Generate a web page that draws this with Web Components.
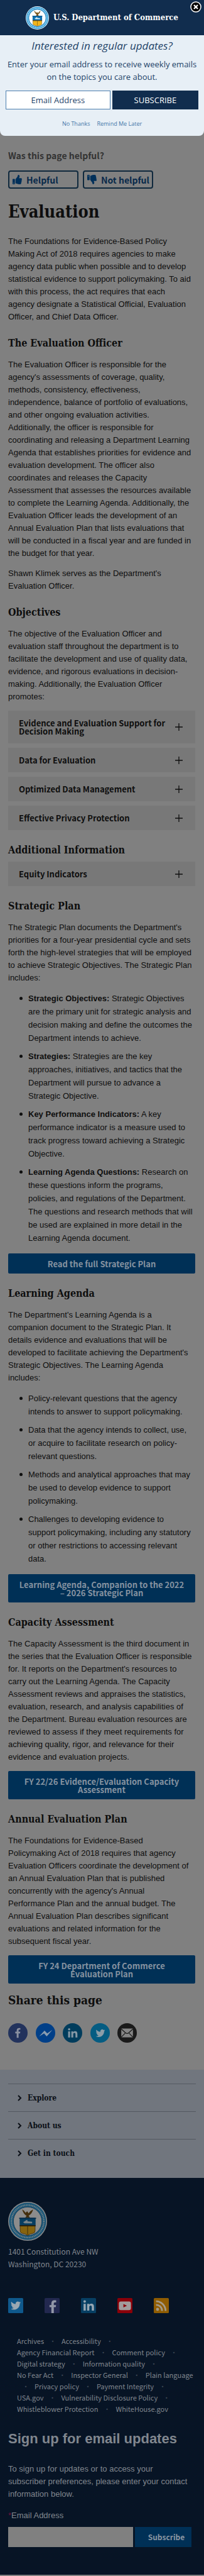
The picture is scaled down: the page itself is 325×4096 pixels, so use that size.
<!DOCTYPE html>
<html lang="en">
<head>
<meta charset="utf-8">
<meta name="viewport" content="width=device-width, initial-scale=1">
<title>Evaluation | U.S. Department of Commerce</title>
<style>
  :root {
    --serif: "DejaVu Serif Condensed", "DejaVu Serif", serif;
    --source: "Noto Sans CJK SC", "Noto Sans", sans-serif;
    --sans: "Liberation Sans", Arial, sans-serif;
    --open: "Open Sans", "Noto Sans", sans-serif;
    --ink: #0e0e0e;
    --action: #003056;
    --action-text: #8592a0;
    --navy: #071425;
  }
  body { margin: 0; background: #808080; color: var(--ink); font: 13px/20px var(--sans); }
  main { display: block; padding: 21px 14px 43px 13px; }
  h1 { margin: 22px 0; font: bold 27px/30px var(--serif); }
  p { margin: 0 0 12px; padding-right: 4px; }
  ul { margin: 0 0 14px; padding: 0 0 0 32px; line-height: 21px; list-style: none; }
  li { position: relative; margin-bottom: 8px; padding-right: 3px; }
  li:last-child { margin-bottom: 0; }
  li::before { content: ""; position: absolute; left: -14px; top: 8px; width: 5px; height: 5px; border-radius: 50%; background: var(--ink); }
</style>
</head>
<body>
<subscribe-popup></subscribe-popup>
<main>
  <page-feedback></page-feedback>
  <h1>Evaluation</h1>
  <p>The Foundations for Evidence-Based Policy Making Act of 2018 requires agencies to make agency data public when possible and to develop statistical evidence to support policymaking. To aid with this process, the act requires that each agency designate a Statistical Official, Evaluation Officer, and Chief Data Officer.</p>

  <content-section heading="The Evaluation Officer">
    <p>The Evaluation Officer is responsible for the agency's assessments of coverage, quality, methods, consistency, effectiveness, independence, balance of portfolio of evaluations, and other ongoing evaluation activities. Additionally, the officer is responsible for coordinating and releasing a Department Learning Agenda that establishes priorities for evidence and evaluation development. The officer also coordinates and releases the Capacity Assessment that assesses the resources available to complete the Learning Agenda. Additionally, the Evaluation Officer leads the development of an Annual Evaluation Plan that lists evaluations that will be conducted in a fiscal year and are funded in the budget for that year.</p>
    <p>Shawn Klimek serves as the Department's Evaluation Officer.</p>
  </content-section>

  <content-section heading="Objectives">
    <p>The objective of the Evaluation Officer and evaluation staff throughout the department is to facilitate the development and use of quality data, evidence, and rigorous evaluations in decision-making. Additionally, the Evaluation Officer promotes:</p>
    <accordion-item>Evidence and Evaluation Support for Decision Making</accordion-item>
    <accordion-item>Data for Evaluation</accordion-item>
    <accordion-item>Optimized Data Management</accordion-item>
    <accordion-item>Effective Privacy Protection</accordion-item>
  </content-section>

  <content-section heading="Additional Information" tight>
    <accordion-item>Equity Indicators</accordion-item>
  </content-section>

  <content-section heading="Strategic Plan">
    <p>The Strategic Plan documents the Department's priorities for a four-year presidential cycle and sets forth the high-level strategies that will be employed to achieve Strategic Objectives. The Strategic Plan includes:</p>
    <ul>
      <li><b>Strategic Objectives:</b> Strategic Objectives are the primary unit for strategic analysis and decision making and define the outcomes the Department intends to achieve.</li>
      <li><b>Strategies:</b> Strategies are the key approaches, initiatives, and tactics that the Department will pursue to advance a Strategic Objective.</li>
      <li><b>Key Performance Indicators:</b> A key performance indicator is a measure used to track progress toward achieving a Strategic Objective.</li>
      <li><b>Learning Agenda Questions:</b> Research on these questions inform the programs, policies, and regulations of the Department. The questions and research methods that will be used are explained in more detail in the Learning Agenda document.</li>
    </ul>
    <action-link>Read the full Strategic Plan</action-link>
  </content-section>

  <content-section heading="Learning Agenda">
    <p>The Department's Learning Agenda is a companion document to the Strategic Plan. It details evidence and evaluations that will be developed to facilitate achieving the Department's Strategic Objectives. The Learning Agenda includes:</p>
    <ul>
      <li>Policy-relevant questions that the agency intends to answer to support policymaking.</li>
      <li>Data that the agency intends to collect, use, or acquire to facilitate research on policy-relevant questions.</li>
      <li>Methods and analytical approaches that may be used to develop evidence to support policymaking.</li>
      <li>Challenges to developing evidence to support policymaking, including any statutory or other restrictions to accessing relevant data.</li>
    </ul>
    <action-link>Learning Agenda, Companion to the 2022 – 2026 Strategic Plan</action-link>
  </content-section>

  <content-section heading="Capacity Assessment">
    <p>The Capacity Assessment is the third document in the series that the Evaluation Officer is responsible for. It reports on the Department's resources to carry out the Learning Agenda. The Capacity Assessment reviews and appraises the statistics, evaluation, research, and analysis capabilities of the Department. Bureau evaluation resources are reviewed to assess if they meet requirements for achieving quality, rigor, and relevance for their evidence and evaluation projects.</p>
    <action-link>FY 22/26 Evidence/Evaluation Capacity Assessment</action-link>
  </content-section>

  <content-section heading="Annual Evaluation Plan">
    <p>The Foundations for Evidence-Based Policymaking Act of 2018 requires that agency Evaluation Officers coordinate the development of an Annual Evaluation Plan that is published concurrently with the agency's Annual Performance Plan and the annual budget. The Annual Evaluation Plan describes significant evaluations and related information for the subsequent fiscal year.</p>
    <action-link>FY 24 Department of Commerce Evaluation Plan</action-link>
  </content-section>

  <share-bar></share-bar>
</main>
<footer-menu></footer-menu>
<site-footer></site-footer>

<script>
const BIRD = '<path d="M23.953 4.57a10 10 0 01-2.825.775 4.958 4.958 0 002.163-2.723c-.951.555-2.005.959-3.127 1.184a4.92 4.92 0 00-8.384 4.482C7.69 8.095 4.067 6.13 1.64 3.162a4.822 4.822 0 00-.666 2.475c0 1.71.87 3.213 2.188 4.096a4.904 4.904 0 01-2.228-.616v.06a4.923 4.923 0 003.946 4.827 4.996 4.996 0 01-2.212.085 4.936 4.936 0 004.604 3.417 9.867 9.867 0 01-6.102 2.105c-.39 0-.779-.023-1.17-.067a13.995 13.995 0 007.557 2.209c9.053 0 13.998-7.496 13.998-13.985 0-.21 0-.42-.015-.63A9.935 9.935 0 0024 4.59z"/>';
const FB = '<path d="M9 24V13H5.500V9H9V6.200C9 2.200 11.200 0 14.800 0c1.400 0 2.600.1 3.200.2v3.700h-2.200c-1.800 0-2.200.9-2.200 2.200V9h4.200l-.6 4h-3.600v11z"/>';
const IN = '<circle cx="3.500" cy="3" r="2.600"/><path d="M1.200 7.800h4.500V22H1.200zM8.600 7.800h4.300v2c.7-1.300 2.200-2.300 4.400-2.300 4.600 0 5.500 3 5.500 6.900V22h-4.500v-6.800c0-1.800-.1-3.700-2.500-3.700s-2.700 1.800-2.700 3.600V22H8.600z"/>';
const THUMB = '<path d="M104 224H24c-13.255 0-24 10.745-24 24v240c0 13.255 10.745 24 24 24h80c13.255 0 24-10.745 24-24V248c0-13.255-10.745-24-24-24zM64 472c-13.255 0-24-10.745-24-24s10.745-24 24-24 24 10.745 24 24-10.745 24-24 24zM384 81.452c0 42.416-25.97 66.208-33.277 94.548h101.723c33.397 0 59.397 27.746 59.553 58.098.084 17.938-7.546 37.249-19.439 49.197l-.11.11c9.836 23.337 8.237 56.037-9.308 79.469 8.681 25.895-.069 57.704-16.382 74.757 4.298 17.598 2.244 32.575-6.148 44.632C440.202 511.587 389.616 512 346.839 512l-2.845-.001c-48.287-.017-87.806-17.598-119.56-31.725-15.957-7.099-36.821-15.887-52.651-16.178-6.54-.12-11.783-5.457-11.783-11.998v-213.77c0-3.2 1.282-6.271 3.558-8.521 39.614-39.144 56.648-80.587 89.117-113.111 14.804-14.832 20.188-37.236 25.393-58.902C282.515 39.293 291.817 0 312 0c24 0 72 8 72 81.452z"/>';

function define(name, html) {
  const template = document.createElement('template');
  customElements.define(name, class extends HTMLElement {
    constructor() {
      super();
      template.innerHTML = typeof html === 'function' ? html(this) : html;
      this.attachShadow({ mode: 'open' }).append(template.content.cloneNode(true));
    }
  });
}

define('commerce-seal', `
<style>
  :host { display: block; width: var(--seal, 37px); height: var(--seal, 37px); flex: none; }
  svg { display: block; width: 100%; height: 100%; }
</style>
<svg viewBox="0 0 78 78" role="img" aria-label="Department of Commerce seal">
  <circle cx="39" cy="39" r="39" fill="#f4f9fd"/>
  <circle cx="39" cy="39" r="37" fill="#2f9bd6"/>
  <circle cx="39" cy="39" r="32.500" fill="none" stroke="#c9e8f8" stroke-width="3" stroke-dasharray="2 1.300"/>
  <circle cx="39" cy="39" r="28.500" fill="#fff" stroke="#17689f" stroke-width="1"/>
  <path d="M28 15q3 10 9 13l-3 4h10l-3-4q7-4 9-13-6 3-9 8l-3-4-3 3q-3-5-7-7z" fill="#7a5418"/>
  <path d="M23 32h32v16H23z" fill="#0d6fae"/>
  <path d="M24 48h30v10q0 4-4 5-6 1-11 4-5-3-11-4-4-1-4-5z" fill="#f3b51c" stroke="#6b4b12" stroke-width="1"/>
  <path d="M38.500 49h1v16h-1zM23 47h32v2H23z" fill="#4d3a14"/>
  <path d="M30 41l8-5 1 3 9 1v3H33z" fill="#d8eefa"/>
  <path d="M22 32h34v2H22z" fill="#0a4d80"/>
</svg>`);

define('subscribe-popup', `
<style>
  :host { display: block; height: 216px; font-family: var(--open); color: #1f4469; text-align: center; }
  section { position: relative; height: 100%; background: #e7eff6; border-radius: 0 0 8px 8px; }
  header { box-sizing: border-box; height: 56px; display: flex; align-items: center; justify-content: center; gap: 7px; background: #112d4e; color: #fff; font: bold 13px/20px var(--serif); }
  .close { position: absolute; top: 2px; right: 4px; width: 18px; height: 18px; padding: 0; border: 0; background: none; }
  .close svg { display: block; }
  h2 { margin: 0; padding-top: 4px; font: italic 17px/26px var(--open); }
  p { margin: 6px 0 12px; font-size: 13px; line-height: 20px; }
  form { display: flex; gap: 3px; padding: 0 9px; }
  input, .go { box-sizing: border-box; height: 30px; font: 13px/20px var(--open); text-align: center; border-radius: 0; }
  input { flex: 6; min-width: 0; border: 1px solid #4c7eae; background: #fff; color: #1f4469; padding: 0; }
  input::placeholder { color: #1f4469; opacity: 1; }
  .go { flex: 5; border: 0; background: #112d4e; color: #fff; padding: 0; }
  nav { display: flex; justify-content: center; gap: 11px; margin-top: 16px; font-size: 9px; line-height: 14px; }
  a { color: #4577a8; text-decoration: none; }
</style>
<section role="dialog" aria-label="Subscribe">
  <header><commerce-seal></commerce-seal><span>U.S. Department of Commerce</span></header>
  <button class="close" aria-label="Close"><svg width="18" height="18" viewBox="0 0 18 18"><circle cx="9" cy="9" r="8" fill="#000" stroke="#fff" stroke-width="1.500"/><path d="M6 6l6 6M12 6l-6 6" stroke="#fff" stroke-width="2.200"/></svg></button>
  <h2>Interested in regular updates?</h2>
  <p>Enter your email address to receive weekly emails<br>on the topics you care about.</p>
  <form><input type="email" aria-label="Email Address" placeholder="Email Address"><button class="go" type="button">SUBSCRIBE</button></form>
  <nav><a href="#no">No Thanks</a><a href="#later">Remind Me Later</a></nav>
</section>`);

define('page-feedback', `
<style>
  :host { display: block; font: bold 14px/20px var(--source); }
  p { margin: 0 0 14px; color: #333; }
  div { display: flex; gap: 7px; }
  button { box-sizing: border-box; width: 112px; height: 29px; display: flex; align-items: center; gap: 7px; padding: 0 5px; border: 2px solid #10293d; border-radius: 4px; background: none; color: #08294a; font: inherit; white-space: nowrap; }
  svg { width: 15px; height: 15px; flex: none; fill: #00305a; }
  .down { transform: scaleY(-1); }
</style>
<p>Was this page helpful?</p>
<div>
  <button><svg viewBox="0 0 512 512">${THUMB}</svg>Helpful</button>
  <button><svg class="down" viewBox="0 0 512 512">${THUMB}</svg>Not helpful</button>
</div>`);

define('content-section', el => `
<style>
  :host { display: block; }
  h2 { margin: 21px 0 13px; font: bold 16px/22px var(--serif); }
  :host([tight]) h2 { margin-bottom: 7px; }
</style>
<h2>${el.getAttribute('heading')}</h2><slot></slot>`);

define('accordion-item', `
<style>
  :host { display: block; margin-bottom: 7px; }
  :host(:last-child) { margin-bottom: 0; }
  button { box-sizing: border-box; width: 100%; display: flex; align-items: center; justify-content: space-between; gap: 12px; padding: 13px 20px 13px 17px; border: 0; background: #787878; color: var(--ink); font: bold 13px/13px var(--source); text-align: left; }
  svg { flex: none; }
</style>
<button aria-expanded="false"><span><slot></slot></span><svg width="12" height="12" viewBox="0 0 12 12"><path d="M0 6h12M6 0v12" stroke="#0e0e0e" stroke-width="1.300"/></svg></button>`);

define('action-link', `
<style>
  :host { display: block; }
  a { display: block; padding: 10px 16px 9px; border-radius: 2px; background: var(--action); color: var(--action-text); font: bold 13px/13px var(--source); text-align: center; text-decoration: none; }
</style>
<a href="#document"><slot></slot></a>`);

define('share-bar', `
<style>
  :host { display: block; }
  h2 { margin: 13px 0 24px; font: bold 19px/26px var(--serif); }
  div { display: flex; justify-content: space-between; width: 205px; }
  a { display: block; height: 31px; }
  svg { display: block; }
</style>
<h2>Share this page</h2>
<div>
  <a href="#facebook" aria-label="Facebook"><svg width="31" height="31" viewBox="0 0 40 40"><circle cx="20" cy="20" r="20" fill="#22325c"/><g transform="translate(10 10) scale(.84)" fill="#8a90a0">${FB}</g></svg></a>
  <a href="#messenger" aria-label="Messenger"><svg width="31" height="31" viewBox="0 0 40 40"><circle cx="20" cy="20" r="20" fill="#003f88"/><path d="M7 27l11-12 5.500 6L34 14 22.500 27l-5.500-6z" fill="#8a9db0"/></svg></a>
  <a href="#linkedin" aria-label="LinkedIn"><svg width="31" height="31" viewBox="0 0 40 40"><circle cx="20" cy="20" r="20" fill="#003c5c"/><g transform="translate(10 10) scale(.88)" fill="#8497a5">${IN}</g></svg></a>
  <a href="#twitter" aria-label="Twitter"><svg width="31" height="31" viewBox="0 0 40 40"><circle cx="20" cy="20" r="20" fill="#055c82"/><g transform="translate(11 11) scale(.8)" fill="#8b9da8">${BIRD}</g></svg></a>
  <a href="#email" aria-label="Email"><svg width="31" height="31" viewBox="0 0 40 40"><circle cx="20" cy="20" r="20" fill="#1a1a1a"/><rect x="8" y="11" width="24" height="18" rx="1" fill="#858585"/><path d="M8 12l9 8q3 2.500 6 0l9-8M8 28.500l8-8M32 28.500l-8-8" fill="none" stroke="#1a1a1a" stroke-width="1.600"/></svg></a>
</div>`);

define('footer-menu', `
<style>
  :host { display: block; padding: 22px 13px 18px; background: #71767e; }
  a { box-sizing: border-box; display: flex; align-items: center; gap: 9px; height: 44px; padding-left: 15px; border-top: 1px solid #545961; color: #0b0f16; font: bold 12px/20px var(--serif); text-decoration: none; }
</style>
${['Explore', 'About us', 'Get in touch'].map(t => `<a href="#menu"><svg width="7" height="10" viewBox="0 0 7 10"><path d="M1 1l4 4-4 4" fill="none" stroke="#0b0f16" stroke-width="2"/></svg>${t}</a>`).join('')}`);

define('site-footer', `
<style>
  :host { display: block; padding: 38px 13px 44px; background: var(--navy); color: #80868e; }
  commerce-seal { --seal: 62px; filter: brightness(.55); }
  address { margin: 7px 0 44px; font: normal 12px/20px var(--source); }
  .social { display: flex; gap: 34px; }
  .social a { display: block; height: 24px; }
  svg { display: block; }
  ul { margin: 35px 0 0; padding: 0 0 0 14px; list-style: none; font: 11px/18px var(--source); }
  li { display: inline; }
  li a { color: inherit; text-decoration: none; white-space: nowrap; }
  i { display: inline-block; width: 28px; text-align: center; font-style: normal; color: #3e4855; }
  h2 { margin: 25px 0 24px; font: bold 22px/28px var(--sans); }
  p { margin: 0 0 14px; padding-right: 10px; }
  label { display: block; margin-bottom: 8px; }
  b { color: #70123a; font-weight: normal; }
  form { display: flex; gap: 3px; padding-right: 7px; }
  input { flex: 1; min-width: 0; box-sizing: border-box; height: 32px; border: 0; border-radius: 0; background: #808080; }
  button { box-sizing: border-box; width: 90px; height: 32px; padding: 0 0 0 10px; border: 0; background: #003056; color: #8995a2; font: bold 12px/20px var(--source); }
</style>
<commerce-seal></commerce-seal>
<address>1401 Constitution Ave NW<br>Washington, DC 20230</address>
<div class="social">
  <a href="#twitter" aria-label="Twitter"><svg width="24" height="24" viewBox="0 0 30 30"><rect width="30" height="30" rx="2" fill="#0f598c"/><g transform="translate(5 5) scale(.84)" fill="#9aa8b2">${BIRD}</g></svg></a>
  <a href="#facebook" aria-label="Facebook"><svg width="24" height="24" viewBox="0 0 30 30"><rect width="30" height="30" rx="2" fill="#22284f"/><g transform="translate(4 4.500) scale(1.060)" fill="#9297a8">${FB}</g></svg></a>
  <a href="#linkedin" aria-label="LinkedIn"><svg width="24" height="24" viewBox="0 0 30 30"><rect width="30" height="30" rx="2" fill="#073f63"/><g transform="translate(4 4) scale(.96)" fill="#97a7b3">${IN}</g></svg></a>
  <a href="#youtube" aria-label="YouTube"><svg width="24" height="24" viewBox="0 0 30 30"><rect width="30" height="30" rx="2" fill="#8a0009"/><rect x="3" y="7" width="24" height="17" rx="4" fill="#a29c9c"/><path d="M12 12l7 3.300-7 3.400z" fill="#8a0009"/></svg></a>
  <a href="#rss" aria-label="RSS"><svg width="24" height="24" viewBox="0 0 30 30"><rect width="30" height="30" rx="2" fill="#8f5c02"/><circle cx="7.500" cy="22.500" r="3" fill="#a39a88"/><path d="M4.500 13.500a12 12 0 0112 12M4.500 6.500a19 19 0 0119 19" fill="none" stroke="#a39a88" stroke-width="3.500"/></svg></a>
</div>
<ul>${['Archives', 'Accessibility', 'Agency Financial Report', 'Comment policy', 'Digital strategy', 'Information quality', 'No Fear Act', 'Inspector General', 'Plain language', 'Privacy policy', 'Payment Integrity', 'USA.gov', 'Vulnerability Disclosure Policy', 'Whistleblower Protection', 'WhiteHouse.gov'].map(t => `<li><a href="#link">${t}</a></li>`).join('<i>•</i>')}</ul>
<h2>Sign up for email updates</h2>
<p>To sign up for updates or to access your subscriber preferences, please enter your contact information below.</p>
<label for="email"><b>*</b>Email Address</label>
<form><input id="email" type="email"><button type="button">Subscribe</button></form>`);
</script>
</body>
</html>
